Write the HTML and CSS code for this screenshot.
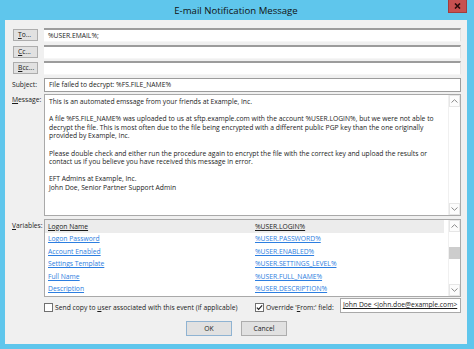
FILE: index.html
```html
<!DOCTYPE html>
<html lang="en">
<head>
    <meta charset="UTF-8">
    <title>E-mail Notification Message</title>
    <link rel="stylesheet" href="styles.css">
</head>
<body>
    <div class="window">
        <div class="titlebar">
            <span class="title">E-mail Notification Message</span>
            <div class="close-btn">
                <svg width="7" height="6" viewBox="0 0 7 6"><path d="M1 0.5 L6 5.5 M6 0.5 L1 5.5" stroke="#2b0b0b" stroke-width="1.6"/></svg>
            </div>
        </div>

        <div class="client">
            <div class="row row-addr">
                <div class="lbl-col"><button class="addr-btn"><u>T</u>o...</button></div>
                <div class="field field-rich">%USER.EMAIL%;</div>
            </div>
            <div class="row row-addr">
                <div class="lbl-col"><button class="addr-btn"><u>C</u>c...</button></div>
                <div class="field field-rich"></div>
            </div>
            <div class="row row-addr">
                <div class="lbl-col"><button class="addr-btn"><u>B</u>cc...</button></div>
                <div class="field field-rich"></div>
            </div>
            <div class="row row-addr">
                <div class="lbl-col"><span class="lbl">Sub<u>j</u>ect:</span></div>
                <div class="field field-box">File failed to decrypt: %FS.FILE_NAME%</div>
            </div>

            <div class="row row-msg">
                <div class="lbl-col"><span class="lbl"><u>M</u>essage:</span></div>
                <div class="field field-box with-scroll">
                    <div class="msg-text">
                        <p>This is an automated emssage from your friends at Example, Inc.</p>
                        <p>A file %FS.FILE_NAME% was uploaded to us at sftp.example.com with the account %USER.LOGIN%, but we were not able to decrypt the file. This is most often due to the file being encrypted with a different public PGP key than the one originally provided by Example, Inc.</p>
                        <p>Please double check and either run the procedure again to encrypt the file with the correct key and upload the results or contact us if you believe you have received this message in error.</p>
                        <p>EFT Admins at Example, Inc.<br>John Doe, Senior Partner Support Admin</p>
                    </div>
                    <div class="vscroll">
                        <div class="sb-arrow"><svg width="7" height="4" viewBox="0 0 7 4"><path d="M0.5 3.5 L3.5 0.7 L6.5 3.5" fill="none" stroke="#8a8a8a"/></svg></div>
                        <div class="sb-track"></div>
                        <div class="sb-arrow"><svg width="7" height="4" viewBox="0 0 7 4"><path d="M0.5 0.5 L3.5 3.3 L6.5 0.5" fill="none" stroke="#8a8a8a"/></svg></div>
                    </div>
                </div>
            </div>

            <div class="row row-vars">
                <div class="lbl-col"><span class="lbl"><u>V</u>ariables:</span></div>
                <div class="field field-box with-scroll">
                    <table class="var-table">
                        <tr class="selected"><td>Logon Name</td><td>%USER.LOGIN%</td></tr>
                        <tr><td>Logon Password</td><td>%USER.PASSWORD%</td></tr>
                        <tr><td>Account Enabled</td><td>%USER.ENABLED%</td></tr>
                        <tr><td>Settings Template</td><td>%USER.SETTINGS_LEVEL%</td></tr>
                        <tr><td>Full Name</td><td>%USER.FULL_NAME%</td></tr>
                        <tr><td>Description</td><td>%USER.DESCRIPTION%</td></tr>
                    </table>
                    <div class="vscroll">
                        <div class="sb-arrow"><svg width="7" height="4" viewBox="0 0 7 4"><path d="M0.5 3.5 L3.5 0.7 L6.5 3.5" fill="none" stroke="#8a8a8a"/></svg></div>
                        <div class="sb-track"><div class="sb-thumb"></div></div>
                        <div class="sb-arrow"><svg width="7" height="4" viewBox="0 0 7 4"><path d="M0.5 0.5 L3.5 3.3 L6.5 0.5" fill="none" stroke="#8a8a8a"/></svg></div>
                    </div>
                </div>
            </div>

            <div class="row row-opts">
                <div class="lbl-col"></div>
                <div class="opts">
                    <label class="check check-copy"><span class="box"></span><span class="check-text">Send copy to <u>u</u>ser associated with this event (if applicable)</span></label>
                    <label class="check"><span class="box checked"><svg width="8" height="7" viewBox="0 0 8 7"><path d="M1 3.6 L3 5.6 L7 1" fill="none" stroke="#222" stroke-width="1.4"/></svg></span><span class="check-text">Override '<u>F</u>rom:' field:</span></label>
                    <div class="field field-box from-field"><u>John Doe &lt;john.doe@example.com&gt;</u></div>
                </div>
            </div>

            <div class="actions">
                <button class="dlg-btn default">OK</button>
                <button class="dlg-btn">Cancel</button>
            </div>
        </div>
    </div>
</body>
</html>
```

FILE: styles.css
```css
* {
    margin: 0;
    padding: 0;
    box-sizing: border-box;
}

body {
    width: 474px;
    height: 349px;
    overflow: hidden;
    font-family: 'Open Sans', 'Noto Sans', sans-serif;
    font-size: 6.75px;
    color: #1b1b1b;
}

.window {
    width: 474px;
    height: 349px;
    background: #5fc6ec;
    padding: 0 7px 5px 5px;
    display: flex;
    flex-direction: column;
}

.titlebar {
    height: 20px;
    position: relative;
    display: flex;
    justify-content: center;
    align-items: center;
}

.title {
    font-size: 9.6px;
    color: #111;
    padding-top: 1px;
}

.close-btn {
    position: absolute;
    right: 0;
    top: 0;
    width: 19px;
    height: 13px;
    background: #c75050;
    border: 1px solid #a33c3c;
    border-top: none;
    display: flex;
    justify-content: center;
    align-items: center;
}

.client {
    flex: 1;
    background: #f0f0f0;
    padding: 8px 6px 0 7px;
    display: flex;
    flex-direction: column;
}

.row {
    display: flex;
}

.row-addr {
    height: 14px;
    margin-bottom: 2.7px;
}

.lbl-col {
    width: 32px;
    flex-shrink: 0;
    display: flex;
    align-items: flex-start;
}

.lbl {
    line-height: 14px;
}

.addr-btn {
    width: 25px;
    height: 12px;
    margin: 1px 0 0 1px;
    font-family: inherit;
    font-size: 6.75px;
    color: #1b1b1b;
    background: #e1e1e1;
    border: 1px solid #adadad;
    text-align: left;
    padding-left: 4px;
    line-height: 10px;
}

.field {
    flex: 1;
    background: #fff;
    line-height: 12px;
    padding: 0 4px;
    white-space: nowrap;
    overflow: hidden;
}

.field-rich {
    border-top: 2px solid #9c9c9c;
    border-right: 1px solid #e3e3e3;
    border-bottom: 1px solid #f6f6f6;
}

.field-box {
    border: 1px solid #a9a9a9;
}

.row-addr .field-box {
    border-color: #9c9c9c;
}

.with-scroll {
    display: flex;
    padding: 0;
}

.row-msg {
    height: 122px;
    margin-top: -0.3px;
}

.row-msg .lbl {
    line-height: 12px;
}

.msg-text {
    flex: 1;
    padding: 2.5px 9px 2.5px 4px;
    line-height: 8.6px;
    white-space: normal;
}

.msg-text p {
    margin-bottom: 8.6px;
}

.vscroll {
    width: 12px;
    flex-shrink: 0;
    display: flex;
    flex-direction: column;
    background: #fff;
    border-left: 1px solid #f0f0f0;
}

.sb-arrow {
    height: 12px;
    display: flex;
    justify-content: center;
    align-items: center;
    border: 1px solid #e6e6e6;
    background: #fcfcfc;
}

.sb-track {
    flex: 1;
    padding-top: 15px;
}

.sb-thumb {
    height: 12px;
    background: #cdcdcd;
}

.row-vars {
    height: 78px;
    margin-top: 3px;
}

.row-vars .lbl {
    line-height: 14px;
}

.var-table {
    flex: 1;
    border-collapse: collapse;
    margin: 0 4px auto 0;
    align-self: flex-start;
}

.var-table td {
    height: 12.5px;
    padding: 0 0 0 3px;
    color: #2c7ee0;
    text-decoration: underline;
    line-height: 12px;
}

.var-table td:first-child {
    width: 207px;
}

.var-table tr.selected td {
    background: #ececec;
    color: #1b1b1b;
}

.row-opts {
    height: 15px;
    margin-top: 1px;
}

.opts {
    flex: 1;
    display: flex;
    align-items: center;
}

.check {
    display: flex;
    align-items: center;
    padding-top: 3px;
}

.check-copy {
    width: 211px;
    flex-shrink: 0;
}

.check-text {
    white-space: nowrap;
}

.box {
    width: 9px;
    height: 9px;
    flex-shrink: 0;
    border: 1px solid #707070;
    background: #fff;
    margin-right: 2px;
    display: flex;
    justify-content: center;
    align-items: center;
}

.from-field {
    flex: none;
    width: 121px;
    height: 15px;
    margin-left: auto;
    padding: 0 2px;
    line-height: 12px;
}

.actions {
    display: flex;
    justify-content: center;
    gap: 9px;
    margin-top: 8px;
}

.dlg-btn {
    width: 46px;
    height: 15px;
    font-family: inherit;
    font-size: 6.75px;
    color: #1b1b1b;
    background: #e1e1e1;
    border: 1px solid #adadad;
}

.dlg-btn.default {
    border-color: #8fb3d2;
}
```
